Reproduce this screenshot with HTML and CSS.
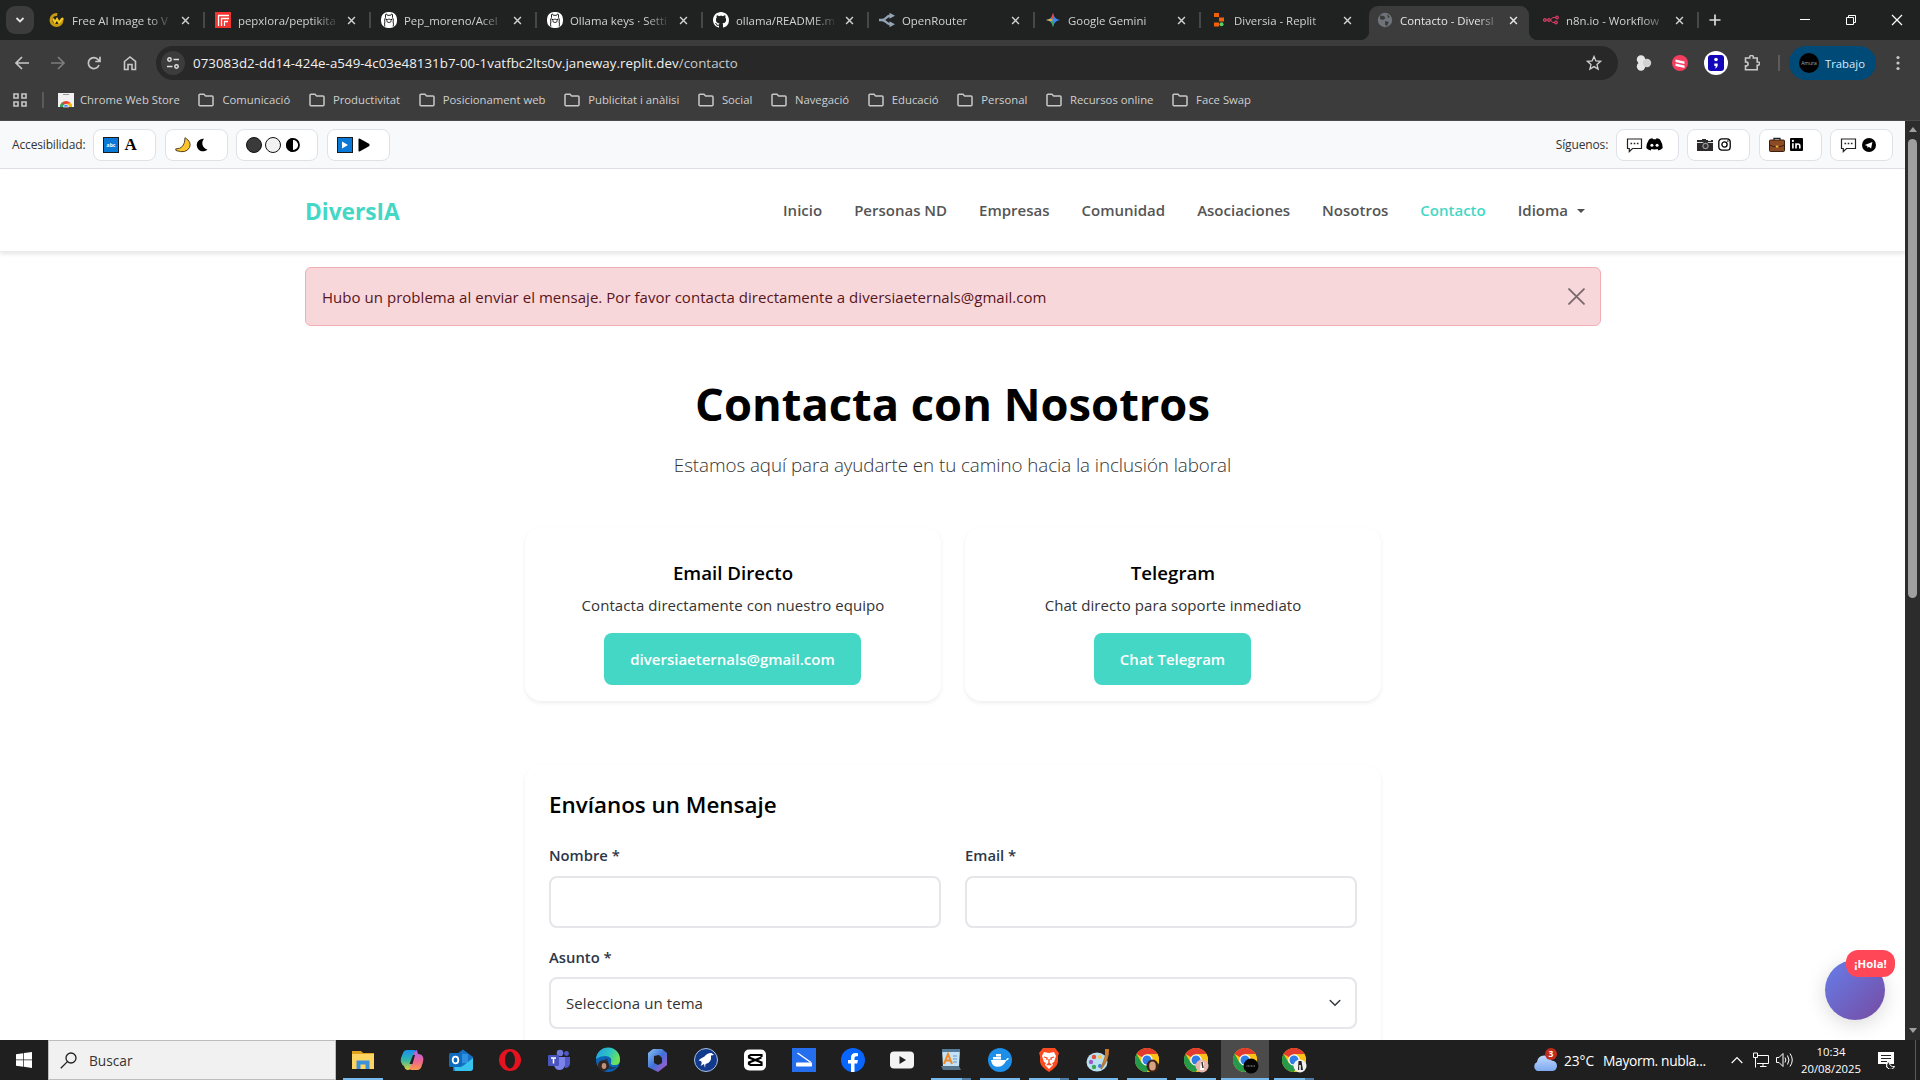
FILE: index.html
```html
<!DOCTYPE html>
<html lang="es">
<head>
<meta charset="utf-8">
<title>Contacto - DiversIA</title>
<link rel="stylesheet" href="styles.css">
</head>
<body>
<svg width="0" height="0" class="defs" aria-hidden="true">
  <defs>
    <linearGradient id="g-cop1" x1="0" y1="0" x2="0" y2="1"><stop offset="0" stop-color="#1a8ff0"/><stop offset=".5" stop-color="#2fb7a6"/><stop offset="1" stop-color="#e8d13a"/></linearGradient>
    <linearGradient id="g-cop2" x1="0" y1="0" x2="0" y2="1"><stop offset="0" stop-color="#a860f0"/><stop offset=".6" stop-color="#f0688c"/><stop offset="1" stop-color="#ff9a4a"/></linearGradient>
    <linearGradient id="g-365" x1="0" y1="0" x2="1" y2="1"><stop offset="0" stop-color="#8ac4f0"/><stop offset=".5" stop-color="#3f6fd8"/><stop offset="1" stop-color="#c257c9"/></linearGradient>
    <linearGradient id="g-edge" x1="0" y1="0" x2="1" y2=".4"><stop offset="0" stop-color="#1b9de2"/><stop offset=".6" stop-color="#2fc5c0"/><stop offset="1" stop-color="#6be35a"/></linearGradient>
    <linearGradient id="g-cloud" x1="0" y1="0" x2="0" y2="1"><stop offset="0" stop-color="#bcd8ff"/><stop offset="1" stop-color="#7fa9ee"/></linearGradient>
    <symbol id="folder" viewBox="0 0 16 16"><path d="M1 3.2a1 1 0 0 1 1-1h4l1.600 1.700H14a1 1 0 0 1 1 1v7.900a1 1 0 0 1-1 1H2a1 1 0 0 1-1-1z" fill="none" stroke="#c7c7c7" stroke-width="1.500"/></symbol>
    <symbol id="x" viewBox="0 0 10 10"><path d="M1.200 1.200l7.600 7.600M8.800 1.200l-7.600 7.600" stroke="currentColor" stroke-width="1.600" fill="none"/></symbol>
    <symbol id="llama" viewBox="0 0 16 16"><rect x="0" width="16" height="16" rx="7" fill="#fff"/><path d="M4.500 5.500V2.500q1-1.500 1.800.8h3.400q.8-2.300 1.800-.8v3q1.500 2 .6 4.500.8 2 0 4.500M4.500 5.500q-1.500 2-.6 4.500-.8 2 0 4.500" fill="none" stroke="#222" stroke-width="1"/><ellipse cx="8" cy="8.800" rx="2.200" ry="1.700" fill="none" stroke="#222" stroke-width=".9"/><circle cx="5.300" cy="7.400" r=".7"/><circle cx="10.700" cy="7.400" r=".7"/></symbol>
    <symbol id="chrome" viewBox="0 0 24 24"><circle cx="12" cy="12" r="12" fill="#fbc116"/><path d="M12 12L1.600 6A12 12 0 0 1 22.400 6H12z" fill="#e33b2e"/><path d="M1.600 6A12 12 0 0 0 12 24l5.200-9L12 12 6.800 15z" fill="#249a4a"/><path d="M22.400 6H12l5.200 9L12 24A12 12 0 0 0 22.400 6z" fill="#fbc116"/><circle cx="12" cy="12" r="5.800" fill="#fff"/><circle cx="12" cy="12" r="4.500" fill="#2f7de9"/></symbol>
    <symbol id="bubble" viewBox="0 0 16 16"><path d="M1 2h14v9.500H6L2.800 14.500v-3H1z" fill="#fff" stroke="#222" stroke-width="1.200"/><path d="M4 6.500h1.600M7.200 6.500h1.600M10.400 6.500h1.600" stroke="#222" stroke-width="1.500"/></symbol>
  </defs>
</svg>

<div class="tabstrip">
  <button class="tab-search"><svg width="10" height="10" viewBox="0 0 10 10"><path d="M1.500 3L5 6.500 8.500 3" fill="none" stroke="#e3e3e3" stroke-width="1.800"/></svg></button>
  <div class="tab"><svg class="fav" viewBox="0 0 16 16"><circle cx="7.500" cy="8" r="5.500" fill="none" stroke="#c79a10" stroke-width="3" stroke-dasharray="26 6"/><path d="M4 6.500l1.800 4L8 7l2 3.500 4-4.500" fill="none" stroke="#f6cb25" stroke-width="2"/></svg><span class="tt">Free AI Image to V</span><svg class="tx"><use href="#x"/></svg></div>
  <div class="tab"><svg class="fav" viewBox="0 0 16 16"><rect width="16" height="16" fill="#f0342f"/><path d="M3.500 14V3.500H14M6.500 14V6.500H14M9.500 14V9.500H13" fill="none" stroke="#fff" stroke-width="1.300"/></svg><span class="tt">pepxlora/peptikita</span><svg class="tx"><use href="#x"/></svg></div>
  <div class="tab"><svg class="fav"><use href="#llama"/></svg><span class="tt">Pep_moreno/Acel</span><svg class="tx"><use href="#x"/></svg></div>
  <div class="tab"><svg class="fav"><use href="#llama"/></svg><span class="tt">Ollama keys · Setti</span><svg class="tx"><use href="#x"/></svg></div>
  <div class="tab"><svg class="fav" viewBox="0 0 16 16"><path fill="#fff" d="M8 0C3.580 0 0 3.580 0 8c0 3.540 2.290 6.530 5.470 7.590.4.070.55-.17.55-.38 0-.19-.01-.82-.01-1.490-2.010.37-2.530-.49-2.690-.94-.09-.23-.48-.94-.82-1.130-.28-.15-.68-.52-.01-.53.63-.01 1.080.58 1.230.82.72 1.210 1.870.87 2.330.66.07-.52.28-.87.51-1.070-1.780-.2-3.640-.89-3.640-3.950 0-.87.31-1.590.82-2.150-.08-.2-.36-1.020.08-2.120 0 0 .67-.21 2.200.82.64-.18 1.320-.27 2-.27s1.360.09 2 .27c1.530-1.040 2.200-.82 2.200-.82.44 1.100.16 1.920.08 2.120.51.56.82 1.270.82 2.150 0 3.070-1.870 3.750-3.650 3.950.29.25.54.73.54 1.480 0 1.070-.01 1.930-.01 2.200 0 .21.15.46.55.38A8.010 8.010 0 0 0 16 8c0-4.420-3.580-8-8-8z"/></svg><span class="tt">ollama/README.m</span><svg class="tx"><use href="#x"/></svg></div>
  <div class="tab"><svg class="fav" viewBox="0 0 16 16"><path d="M0 8h3q2 0 4-2t4-2.200M3 8q2 0 4 2t4 2.200" fill="none" stroke="#94a3b8" stroke-width="2.400"/><path d="M10.500 0.800l5.500 3-5.500 3zM10.500 9.200l5.500 3-5.500 3z" fill="#94a3b8"/></svg><span class="tt">OpenRouter</span><svg class="tx"><use href="#x"/></svg></div>
  <div class="tab"><svg class="fav" viewBox="0 0 16 16"><path d="M8 1q1 6 7 7-6 1-7 7-1-6-7-7 6-1 7-7z" fill="#3f87f5"/><path d="M8 1q1 6 1.500 5.500L6 7z" fill="#ea4a3c"/><path d="M1 8l5-1.300L8 8l-2 1.300z" fill="#f2b51f"/><path d="M8 15l-1.500-5L8 8.500l1 2z" fill="#35a853"/></svg><span class="tt">Google Gemini</span><svg class="tx"><use href="#x"/></svg></div>
  <div class="tab nosep"><svg class="fav" viewBox="0 0 16 16"><path d="M3 1h5v4H3zM8 5.500h5v4H8zM3 10.500h5v4H3z" fill="#f2600c"/><circle cx="10.500" cy="12.200" r="2" fill="#56d364"/></svg><span class="tt">Diversia - Replit</span><svg class="tx"><use href="#x"/></svg></div>
  <div class="tab active"><svg class="fav" viewBox="0 0 16 16"><circle cx="8" cy="8" r="7.200" fill="#6f747b"/><path d="M3 3.500l4 .5 1.500 2L6 8 3 7zM8 9l4 1-2 4-2-1zM10 2l3 3-2 1z" fill="#3c3c3c"/></svg><span class="tt">Contacto - Diversl</span><svg class="tx"><use href="#x"/></svg></div>
  <div class="tab"><svg class="fav" viewBox="0 0 16 16"><path d="M1.600 8h6l2-2.500h4M7.600 8l2 2.500h3" stroke="#dd3d67" fill="none"/><g fill="#3c1c26" stroke="#dd3d67" stroke-width="1.200"><circle cx="1.800" cy="8" r="1.300"/><circle cx="6" cy="8" r="1.300"/><circle cx="14" cy="5.500" r="1.300"/><circle cx="13" cy="10.500" r="1.300"/></g></svg><span class="tt">n8n.io - Workflow</span><svg class="tx"><use href="#x"/></svg></div>
  <svg class="newtab" viewBox="0 0 12 12"><path d="M6 .5v11M.5 6h11" stroke="#dcdcdc" stroke-width="1.700"/></svg>
  <div class="winbtns">
    <svg viewBox="0 0 12 12"><path d="M1 5.500h10" stroke="#fff"/></svg>
    <svg viewBox="0 0 12 12"><path d="M1.500 3.500h7v7h-7zM3.500 3.500v-2h7v7h-2" fill="none" stroke="#fff"/></svg>
    <svg viewBox="0 0 12 12"><path d="M1 1l10 10M11 1L1 11" stroke="#fff" stroke-width="1.200"/></svg>
  </div>
</div>

<div class="toolbar">
  <div class="navbtns">
    <svg viewBox="0 0 16 16"><path d="M15 8H2M8 2L2 8l6 6" fill="none" stroke="#c7c7c7" stroke-width="1.700"/></svg>
    <svg viewBox="0 0 16 16"><path d="M1 8h13M8 2l6 6-6 6" fill="none" stroke="#7c7c7c" stroke-width="1.700"/></svg>
    <svg viewBox="0 0 16 16"><path d="M13 10a5.500 5.500 0 1 1-.8-5.300L14 6.500M14 1.800v4.700H9.300" fill="none" stroke="#c7c7c7" stroke-width="1.700"/></svg>
    <svg viewBox="0 0 16 16"><path d="M2.500 6.500L8 2l5.500 4.500V14.500H10V9.500H6v5H2.500z" fill="none" stroke="#c7c7c7" stroke-width="1.600"/></svg>
  </div>
  <div class="omnibox">
    <span class="site"><svg width="16" height="16" viewBox="0 0 16 16"><g fill="none" stroke="#dedede" stroke-width="1.500"><circle cx="4.500" cy="4.500" r="1.700"/><path d="M8.500 4.500H14M2 11.500h5.500"/><circle cx="11.500" cy="11.500" r="1.700"/></g></svg></span>
    <span class="url">073083d2-dd14-424e-a549-4c03e48131b7-00-1vatfbc2lts0v.janeway.replit.dev<i>/contacto</i></span>
    <svg class="star" viewBox="0 0 16 16"><path d="M8 1.500l1.900 4.400 4.700.4-3.600 3.100 1.100 4.700L8 11.600l-4.100 2.500L5 9.400 1.400 6.300l4.700-.4z" fill="none" stroke="#d0d0d0" stroke-width="1.300"/></svg>
  </div>
  <div class="exts">
    <svg viewBox="0 0 16 16"><g fill="#e6e6e6"><circle cx="5" cy="4.500" r="4.200"/><circle cx="5" cy="11.500" r="4.200"/><circle cx="11" cy="8" r="4.200" fill="#d2d2d2"/></g></svg>
    <svg viewBox="0 0 16 16"><circle cx="8" cy="8" r="8" fill="#f53d5f"/><path d="M3.500 4.500l9 2v2.500l-9-2zM3.500 8.500l9 2V13l-9-2z" fill="#fff"/></svg>
    <svg class="big" viewBox="0 0 24 24"><circle cx="12" cy="12" r="12" fill="#fff"/><rect x="4" y="4" width="16" height="16" rx="3" fill="#1206b8"/><circle cx="12" cy="8.500" r="1.800" fill="#fff"/><path d="M10.300 12.500h3.400q.6 3.500-2.500 5l.6-2.500h-1.500z" fill="#fff"/></svg>
    <svg viewBox="0 0 16 16"><path d="M1.500 3h4.200q-.4-2.500 1.800-2.500T9.300 3h3.900v4q2.300-.3 2.300 1.600T13.200 10.300V14.800H1.500v-3.900q2.600 0 2.600-2t-2.600-2z" fill="none" stroke="#c7c7c7" stroke-width="1.600"/></svg>
  </div>
  <span class="tsep"></span>
  <div class="profile"><span class="avatar">Amura</span>Trabajo</div>
  <svg class="dots" viewBox="0 0 4 16"><g fill="#c7c7c7"><circle cx="2" cy="2.500" r="1.600"/><circle cx="2" cy="8" r="1.600"/><circle cx="2" cy="13.500" r="1.600"/></g></svg>
</div>

<div class="bookmarks">
  <svg class="apps" viewBox="0 0 16 16"><path d="M2 2h4v4H2zM10 2h4v4h-4zM2 10h4v4H2zM10 10h4v4h-4z" fill="none" stroke="#c7c7c7" stroke-width="1.600"/></svg>
  <span class="bsep"></span>
  <span class="bm store"><svg viewBox="0 0 16 16"><path d="M0 1h16v14H0z" fill="#f1f1f1"/><path d="M5 2.500h6" stroke="#999"/><path d="M2 15a6 6 0 0 1 12 0z" fill="#e94235"/><path d="M2 15a6 6 0 0 1 2-4.500L7 15z" fill="#34a853"/><path d="M14 15a6 6 0 0 0-1.500-4L8 12v3z" fill="#fbbc05"/><path d="M5.300 15a2.700 2.700 0 0 1 5.400 0z" fill="#4285f4" stroke="#fff" stroke-width=".7"/></svg>Chrome Web Store</span>
  <span class="bm"><svg><use href="#folder"/></svg>Comunicació</span>
  <span class="bm"><svg><use href="#folder"/></svg>Productivitat</span>
  <span class="bm"><svg><use href="#folder"/></svg>Posicionament web</span>
  <span class="bm"><svg><use href="#folder"/></svg>Publicitat i anàlisi</span>
  <span class="bm"><svg><use href="#folder"/></svg>Social</span>
  <span class="bm"><svg><use href="#folder"/></svg>Navegació</span>
  <span class="bm"><svg><use href="#folder"/></svg>Educació</span>
  <span class="bm"><svg><use href="#folder"/></svg>Personal</span>
  <span class="bm"><svg><use href="#folder"/></svg>Recursos online</span>
  <span class="bm"><svg><use href="#folder"/></svg>Face Swap</span>
</div>

<div class="viewport">
  <div class="page">
    <div class="access">
      <span class="alabel">Accesibilidad:</span>
      <button class="abtn"><svg width="16" height="16" viewBox="0 0 16 16"><rect x=".5" y=".5" width="15" height="15" fill="#0a78d7" stroke="#1b1b1b"/><text x="8" y="10" font-size="5" font-weight="700" fill="#fff" text-anchor="middle" font-family="Open Sans">abc</text></svg><span class="serif-a">A</span></button>
      <button class="abtn"><svg width="16" height="16" viewBox="0 0 16 16"><path d="M10 .7Q17 5 14.500 10.500 11 17 1 13.500l-.3-1.600Q10 12 10 .7z" fill="#fcc52c" stroke="#2b2112" stroke-width=".8"/></svg><svg width="12" height="14" viewBox="0 0 12 14"><path d="M8 .8A6.300 6.300 0 1 0 11.500 11.500 6.500 6.500 0 0 1 8 .8z"/></svg></button>
      <button class="abtn w3"><svg width="16" height="16" viewBox="0 0 16 16"><circle cx="8" cy="8" r="7.500" fill="#3a3a3a" stroke="#111"/></svg><svg class="m3" width="16" height="16" viewBox="0 0 16 16"><circle cx="8" cy="8" r="7.500" fill="#f2f2f2" stroke="#111"/></svg><svg width="14" height="14" viewBox="0 0 14 14"><circle cx="7" cy="7" r="6" fill="#fff" stroke="#000" stroke-width="1.800"/><path d="M7 0a7 7 0 0 0 0 14z"/></svg></button>
      <button class="abtn"><svg width="16" height="16" viewBox="0 0 16 16"><rect x=".5" y=".5" width="15" height="15" fill="#0a78d7" stroke="#1b1b1b"/><path d="M5 4.500v7l6-3.500z" fill="#fff"/></svg><svg width="12" height="14" viewBox="0 0 12 14"><path d="M.5 1.500q0-1.500 1.500-.7l9 5q1.200 1.200 0 2.400l-9 5q-1.500.8-1.500-.7z"/></svg></button>
      <div class="social">
      <span class="alabel follow">Síguenos:</span>
      <button class="abtn"><svg width="17" height="16"><use href="#bubble"/></svg><svg class="dc" width="17" height="13" viewBox="0 0 17 13"><path d="M3 1.500Q5 .4 6.500.3L7 1.200h3l.5-.9q1.500.1 3.500 1.200 2.700 4 2.700 8.500-1.500 1.800-4.200 2.600l-1-1.500q-3 .9-6 0l-1 1.500Q1.800 11.800.3 10 .3 5.500 3 1.500z"/><circle cx="5.900" cy="7.200" r="1.500" fill="#fff"/><circle cx="11.100" cy="7.200" r="1.500" fill="#fff"/></svg></button>
      <button class="abtn"><svg width="16" height="16" viewBox="0 0 16 16"><path d="M0 3h5V2h4v1h7v11H0z" fill="#2c2a2a"/><path d="M0 5.500h16" stroke="#ddd"/><circle cx="8.500" cy="9" r="3.800" fill="#999" stroke="#222"/><circle cx="8.500" cy="9" r="2" fill="#333"/><path d="M11 3.500h3" stroke="#eee"/></svg><svg width="13" height="13" viewBox="0 0 13 13"><g fill="none" stroke="#000" stroke-width="1.300"><rect x=".8" y=".8" width="11.400" height="11.400" rx="3.200"/><circle cx="6.500" cy="6.500" r="2.600"/></g><circle cx="9.900" cy="3.100" r=".8"/></svg></button>
      <button class="abtn"><svg width="16" height="16" viewBox="0 0 16 16"><path d="M5 3.500V1.300h6v2.200" fill="none" stroke="#222" stroke-width="1.300"/><rect x=".5" y="3" width="15" height="11.500" rx="1" fill="#8a4b25" stroke="#3a1f10"/><path d="M.5 8q7.500 4 15 0" fill="none" stroke="#3a1f10"/><rect x="6.800" y="8.600" width="2.600" height="2" fill="#f5b52e"/></svg><svg width="13" height="13" viewBox="0 0 13 13"><rect width="13" height="13" rx="1"/><path d="M2.900 5.200v5.200M6 10.400V5.200M6 8q0-2 1.900-2t1.900 2v2.400" fill="none" stroke="#fff" stroke-width="1.600"/><circle cx="2.900" cy="2.900" r="1.100" fill="#fff"/></svg></button>
      <button class="abtn"><svg width="17" height="16"><use href="#bubble"/></svg><svg width="14" height="14" viewBox="0 0 14 14"><circle cx="7" cy="7" r="7"/><path d="M2.800 6.900l7.600-3-1.300 6.500-2.300-1.600-1.200 1.200-.3-2z" fill="#fff"/></svg></button>
      </div>
    </div>
    <nav class="mainnav">
      <span class="brand">DiversIA</span>
      <div class="links"><a>Inicio</a><a>Personas ND</a><a>Empresas</a><a>Comunidad</a><a>Asociaciones</a><a>Nosotros</a><a class="on">Contacto</a><a class="drop">Idioma</a></div>
    </nav>
    <div class="alert"><span>Hubo un problema al enviar el mensaje. Por favor contacta directamente a diversiaeternals@gmail.com</span><svg width="17" height="17" viewBox="0 0 16 16"><path d="M1 1l14 14M15 1L1 15" stroke="#7b6b6d" stroke-width="1.800" stroke-linecap="round"/></svg></div>
    <h1>Contacta con Nosotros</h1>
    <p class="lead">Estamos aquí para ayudarte en tu camino hacia la inclusión laboral</p>
    <div class="cards">
      <div class="card"><h4>Email Directo</h4><p>Contacta directamente con nuestro equipo</p><a class="cta">diversiaeternals@gmail.com</a></div>
      <div class="card"><h4>Telegram</h4><p>Chat directo para soporte inmediato</p><a class="cta tg">Chat Telegram</a></div>
    </div>
    <div class="formcard">
      <h3>Envíanos un Mensaje</h3>
      <div class="row">
        <div class="field"><label>Nombre *</label><div class="box"></div></div>
        <div class="field"><label>Email *</label><div class="box"></div></div>
      </div>
      <div class="field"><label>Asunto *</label><div class="box select">Selecciona un tema<svg width="12" height="12" viewBox="0 0 12 12"><path d="M1.200 3.500L6 8.300l4.800-4.800" fill="none" stroke="#343a40" stroke-width="1.500" stroke-linecap="round"/></svg></div></div>
    </div>
    <div class="chat"><span>¡Hola!</span></div>
  </div>
  <div class="scroll"><i class="up"></i><i class="thumb"></i><i class="down"></i></div>
</div>

<div class="taskbar">
  <div class="start"><svg width="16" height="16" viewBox="0 0 16 16"><path d="M0 2.200l7.300-1v6.300H0zM8 1.100L16 0v7.500H8zM0 8.300h7.300v6.400L0 13.700zM8 8.300h8V16l-8-1.200z" fill="#fff"/></svg></div>
  <div class="search"><svg width="17" height="17" viewBox="0 0 17 17"><circle cx="11" cy="6" r="5" fill="none" stroke="#222" stroke-width="1.300"/><path d="M7.400 9.600L.8 16.200" stroke="#222" stroke-width="1.300"/></svg>Buscar</div>
  <div class="tasks">
    <div class="task open"><svg viewBox="0 0 24 24"><path d="M1 3h9l2 2h11v16H1z" fill="#e0a11d"/><path d="M1 6h22v15H1z" fill="#fcd462"/><path d="M5.500 21v-8.500h13V21h-4v-4.500h-5V21z" fill="#3c91d9"/></svg></div>
    <div class="task"><svg viewBox="0 0 24 24"><path d="M7 2h7q2 0 1.500 2L11 20q-1 2-3 2-3 0-4-4-2-1-3-4-.5-2 0-4l2-5q1-3 4-3z" fill="url(#g-cop1)"/><path d="M17 22h-6q-1.500-.5-1-2l4-15q1-3 3-3l1 4q4 0 5 3t-1 8q-1 5-5 5z" fill="url(#g-cop2)"/><path d="M9.500 16L13 7h2l-2.500 9z" fill="#1f1f1f"/></svg></div>
    <div class="task"><svg viewBox="0 0 24 24"><path d="M4 9L14 1.500 24 9v11a3 3 0 0 1-3 3H4z" fill="#1572c4"/><path d="M5 6h14v9H5z" fill="#2f8fe0"/><path d="M4 14l10 4 10-8v10a3 3 0 0 1-3 3H6z" fill="#38c3ee"/><rect y="5" width="13" height="14" rx="1.500" fill="#0f6cbd"/><ellipse cx="6.500" cy="12" rx="2.800" ry="3.400" fill="none" stroke="#fff" stroke-width="1.800"/></svg></div>
    <div class="task"><svg viewBox="0 0 24 24"><ellipse cx="12" cy="12" rx="11" ry="11" fill="#e5121f"/><ellipse cx="12" cy="12" rx="5" ry="8.500" fill="#1f1f1f"/></svg></div>
    <div class="task"><svg viewBox="0 0 24 24"><circle cx="13" cy="5" r="3.300" fill="#6f78d8"/><circle cx="19.500" cy="5.500" r="2.400" fill="#5059c9"/><path d="M15 9h8v7q-1 4-5 4z" fill="#5059c9"/><path d="M7 9h11v8q-1 5-5.500 5T7 17z" fill="#7b83eb"/><rect x="1" y="7" width="11" height="11" rx="1" fill="#4a54bd"/><path d="M4 10h5M6.500 10v5.500" stroke="#fff" stroke-width="1.500"/></svg></div>
    <div class="task"><svg viewBox="0 0 24 24"><circle cx="12" cy="12" r="12" fill="#0d63b8"/><path d="M0 11A12 12 0 0 1 24 12q0 5-5 5-5 0-4-2 2-6-5-7-6 0-10 3z" fill="url(#g-edge)"/><path d="M10 10q-4 5 1 10 4 4 10-1-8 1-9-4 1-3-2-5z" fill="#1f1f1f" opacity=".5"/><circle cx="7.500" cy="17.500" r="5.500" fill="#332620"/><ellipse cx="8" cy="18" rx="2.300" ry="3" fill="#c4917a"/></svg></div>
    <div class="task"><svg viewBox="0 0 24 24"><path d="M8 1h9l5 4v12l-9 7-10-5V5z" fill="url(#g-365)"/><path d="M9 8l5-1 3 3v5l-4 2-4-2z" fill="#1f1f1f"/></svg></div>
    <div class="task"><svg viewBox="0 0 24 24"><circle cx="12" cy="12" r="11.500" fill="#123a8c" stroke="#a9bfe2"/><path d="M4.500 12.500q2-2 6-4 3-4 7-3.500l2.500 2-3 .5q1 7-5.500 8.500l-.5 4-1-4-3.500 2q2-3 .5-5z" fill="#fff"/></svg></div>
    <div class="task"><svg viewBox="0 0 24 24"><rect x="1" y="1.500" width="22" height="21" rx="5" fill="#fff"/><path d="M18.500 9V7h-11L6 8v1.500l12.500 5V17H7.500L6 16v-1.500l12.500-5" fill="none" stroke="#000" stroke-width="2.200"/></svg></div>
    <div class="task"><svg viewBox="0 0 24 24"><rect width="24" height="24" fill="#256fee"/><path d="M5.500 5L19 14.500" stroke="#fff" stroke-width="1.500"/><rect x="4" y="14.500" width="16" height="4" rx=".8" fill="#fff"/></svg></div>
    <div class="task"><svg viewBox="0 0 24 24"><circle cx="12" cy="12" r="12" fill="#0866ff"/><path d="M10 24v-8.500H7V12h3V9.500Q10 5 14.500 5l2.500.3v3h-1.500q-2 0-2 1.800V12h3.400l-.6 3.500h-2.800V24z" fill="#fff"/></svg></div>
    <div class="task"><svg viewBox="0 0 24 24"><rect y="3.500" width="24" height="17" rx="4" fill="#f3f3f3"/><path d="M9.500 8v8l6.500-4z" fill="#1f1f1f"/></svg></div>
    <div class="task open multi"><svg viewBox="0 0 24 24"><path d="M3 1h18l-1 18H4z" fill="#c5e3f8"/><path d="M3 1h18v3H3z" fill="#527b9b"/><path d="M2 18h18l2 4H4z" fill="#56748a"/><path d="M5 16L9 6l4 10M6.500 12.500h5" fill="none" stroke="#f18a25" stroke-width="2"/><path d="M14 8h4M14 11h4M14 14h4" stroke="#6b96b8"/></svg></div>
    <div class="task open"><svg viewBox="0 0 24 24"><circle cx="12" cy="12" r="12" fill="#1d8fe8"/><path d="M3 12h15q1-3 3-1.500-1 2-3 2.200-2 6-9 6-5 0-6-6.700z" fill="#fff"/><path d="M5 9h8v2.500H5zM8 6h5v2.500H8z" fill="#fff"/></svg></div>
    <div class="task open multi"><svg viewBox="0 0 24 24"><path d="M6 0h12l4 5-1 3v6q-1 5-9 10Q4 19 3 14V8L2 5z" fill="#fb4b1f"/><path d="M7 4l5 1 5-1 2 4-2 6-2 1 1 2-4 4-4-4 1-2-2-1-2-6z" fill="#fff"/><path d="M7 9l3 1v2M17 9l-3 1v2M12 11v4l-1.500 1.500h3L12 15" stroke="#fb4b1f" fill="none" stroke-width="1.300"/></svg></div>
    <div class="task open"><svg viewBox="0 0 24 24"><ellipse cx="11" cy="14" rx="10.500" ry="9.500" fill="#b9dff3"/><circle cx="5" cy="14" r="2.200" fill="#9b59c9"/><circle cx="8" cy="9" r="2.200" fill="#e74c3c"/><circle cx="14" cy="9" r="2" fill="#f6c944"/><circle cx="8" cy="19" r="2.200" fill="#3fa74d"/><circle cx="14" cy="18" r="2" fill="#3682d8"/><path d="M22 2q1 9-7 19L20 7z" stroke="#b9762e" stroke-width="1.500" fill="#e5a45a"/><path d="M19 1h4l-1 7-3-1z" fill="#d07a2c"/></svg></div>
    <div class="task open"><svg viewBox="0 0 24 24"><use href="#chrome"/><ellipse cx="17.500" cy="18" rx="6" ry="6.500" fill="#3c2419"/><ellipse cx="17.500" cy="18" rx="3.300" ry="4.500" fill="#d9a283"/></svg></div>
    <div class="task open"><svg viewBox="0 0 24 24"><use href="#chrome"/><circle cx="18" cy="18" r="6.500" fill="#e6b8ae"/><path d="M17 13l3 2v7h-4z" fill="#fff"/><path d="M18 14l1 6" stroke="#333" stroke-width="1.500"/></svg></div>
    <div class="task open cur"><svg viewBox="0 0 24 24"><use href="#chrome"/><circle cx="18" cy="18" r="7.500" fill="#060606"/><path d="M13.500 18h9" stroke="#999" stroke-dasharray="1 .5"/></svg></div>
    <div class="task open multi"><svg viewBox="0 0 24 24"><use href="#chrome"/><circle cx="18" cy="18" r="6.500" fill="#f1f1f1"/><path d="M16.500 13h3l1.500 9h-5z" fill="#222"/><path d="M18 17v5" stroke="#fff" stroke-width="1.500"/></svg></div>
  </div>
  <div class="tray">
    <svg class="weather" width="26" height="26" viewBox="0 0 26 26"><path d="M5 24a5 5 0 0 1 0-9q1-7 8-6.500 5 .5 6.500 5Q25 14 25 19q-.5 5-5 5z" fill="url(#g-cloud)"/><circle cx="19" cy="7" r="6" fill="#c42b1c"/><text x="19" y="10" font-size="8.500" font-weight="700" fill="#fff" text-anchor="middle" font-family="Open Sans">3</text></svg>
    <span class="temp">23°C</span><span class="cond">Mayorm. nubla...</span>
    <svg class="chev" width="12" height="8" viewBox="0 0 12 8"><path d="M.7 7L6 1.500 11.300 7" fill="none" stroke="#fff" stroke-width="1.200"/></svg>
    <svg class="net" width="16" height="16" viewBox="0 0 16 16"><path d="M5 3.500h10.500v8H4M2.500 6v9.500M7 14.500h6.500M10 11.500v3M.5 1h4v4.500h-4z" fill="none" stroke="#fff"/></svg>
    <svg class="vol" width="17" height="16" viewBox="0 0 17 16"><path d="M.5 5.500H3l4-4v13l-4-4H.5zM9 5.500q1.700 2.500 0 5M11.500 3.500q3 4.500 0 9M14 1.500q4.500 6.500 0 13" fill="none" stroke="#fff"/></svg>
    <div class="clock">10:34<br>20/08/2025</div>
    <svg class="notif" width="17" height="17" viewBox="0 0 17 17"><path d="M0 0h16v12h-5l-3 4v-4H0z" fill="#fff"/><path d="M3 3.500h10M3 6.500h10M3 9.500h6" stroke="#222"/><path d="M11.500 9.500a4 4 0 1 0 5 5 4 4 0 0 1-5-5z" fill="#222" stroke="#fff"/></svg>
  </div>
</div>
</body>
</html>
```
FILE: styles.css
```css
*{box-sizing:border-box}
body{margin:0;width:1920px;height:1080px;overflow:hidden;display:flex;flex-direction:column;font-family:"Open Sans","Noto Sans",sans-serif;background:#fff;color:#333}
h1,h3,h4,p{margin:0}
svg{flex:none;display:block}
.defs{position:absolute}

/* Browser tabs */
.tabstrip{height:40px;flex:none;background:#1f2221;display:flex;align-items:center;padding-left:6px}
.tab-search{width:28px;height:28px;border:0;border-radius:9px;background:#3c3c3c;display:flex;align-items:center;justify-content:center;padding:0;margin-right:4px}
.tab{width:166px;flex:none;height:34px;align-self:flex-end;display:flex;align-items:center;padding:0 14px 6px 11px;color:#d2d2d2;font-size:11.400px;position:relative}
.tab::after{content:"";position:absolute;right:-1px;top:6px;width:2px;height:16px;background:#464847}
.tab.nosep::after,.tab.active::after{display:none}
.fav{width:16px;height:16px;margin-right:7px}
.tt{width:98px;white-space:nowrap;-webkit-mask-image:linear-gradient(90deg,#000 76px,rgba(0,0,0,.15) 98px)}
.tx{width:9px;height:9px;margin-left:11px}
.tab.active{color:#e8e8e8;width:160px;margin:0 3px;padding-left:8px;padding-right:11px;background:#3c3c3c;border-radius:9px 9px 0 0}
.tab.active::before{content:"";position:absolute;left:-9px;right:-9px;bottom:0;height:9px;background:radial-gradient(circle at 0 0,transparent 9px,#3c3c3c 9.500px) left/9px 9px no-repeat,radial-gradient(circle at 100% 0,transparent 9px,#3c3c3c 9.500px) right/9px 9px no-repeat}
.newtab{width:12px;height:12px;margin-left:11px}
.winbtns{margin-left:auto;display:flex;gap:34px;padding-right:17px}
.winbtns svg{width:12px;height:12px}

/* Toolbar */
.toolbar{height:46px;flex:none;background:#3c3c3c;display:flex;align-items:center;padding-left:14px}
.navbtns{display:flex;gap:20px;width:142px}
.navbtns svg{width:16px;height:16px}
.omnibox{width:1462px;height:34px;border-radius:17px;background:#282828;display:flex;align-items:center;padding:0 16px 0 5px}
.site{width:24px;height:24px;border-radius:50%;background:#3c3c3c;display:flex;align-items:center;justify-content:center;margin-right:8px}
.url{font-size:13.300px;color:#f0f0f0;letter-spacing:.05px;white-space:nowrap}
.url i{font-style:normal;color:#c8c8c8}
.star{width:16px;height:16px;margin-left:auto}
.exts{display:flex;align-items:center;gap:20px;margin-left:18px}
.exts svg{width:16px;height:16px}
.exts .big{width:24px;height:24px;margin:0 -4px}
.tsep{width:2px;height:16px;background:#5c5c5c;margin:0 9px 0 18px}
.profile{width:87px;height:34px;border-radius:17px;background:#004a77;color:#d5ecff;font-size:11.300px;display:flex;align-items:center;padding-left:10px;gap:6px}
.avatar{width:20px;height:20px;border-radius:50%;background:#000;color:#aaa;font-size:5px;line-height:20px;text-align:center}
.dots{width:4px;height:16px;margin-left:20px}
.bookmarks{height:35px;flex:none;background:#3c3c3c;border-bottom:1px solid #4a4a4a;display:flex;align-items:center;padding:0 0 7px 12px;color:#cfcfcf;font-size:11.300px}
.apps{width:16px;height:16px}
.bsep{width:2px;height:16px;background:#5a5a5a;margin:0 14px}
.bm{display:flex;align-items:center;gap:8px;margin-right:18.650px;white-space:nowrap}
.bm svg{width:16px;height:16px}
.bm.store{gap:6px}

/* Page */
.viewport{height:919px;flex:none;display:flex}
.page{width:1905px;position:relative;overflow:hidden}
.access{height:48px;background:#f8f9fa;border-bottom:1px solid #dee2e6;display:flex;align-items:center;padding:0 12px;gap:8.400px}
.social{margin-left:auto;display:flex;align-items:center;gap:8.300px}
.alabel{font-size:12px;width:73px;white-space:nowrap;letter-spacing:-.15px}
.follow{width:52px}
.abtn{width:63px;height:32px;background:#fff;border:1px solid #dee2e6;border-radius:8px;display:flex;align-items:center;padding:0 0 0 9px;gap:5px;flex:none}
.abtn.w3{width:82px}
.m3{margin-left:-2px}
.dc{margin-left:-2px}
.serif-a{font:bold 17px/16px "Liberation Serif",serif;color:#000}
.mainnav{height:83px;display:flex;align-items:center;justify-content:space-between;padding:0 320px 0 305px;box-shadow:0 2px 4px rgba(0,0,0,.1);border-bottom:1px solid #ebebeb}
.brand{font-size:22.700px;font-weight:700;color:#44d7c5;padding-top:2px}
.links{display:flex;gap:32px;font-size:15px;font-weight:600;color:#555;letter-spacing:0}
.on{color:#44d7c5}
.drop::after{content:"";display:inline-block;border:4px solid transparent;border-top-color:#4f4f4f;border-bottom:0;margin-left:9px;vertical-align:3px}
.alert{margin:15px 304px 0 305px;height:59px;background:#f8d7da;border:1px solid #f1aeb5;border-radius:6px;color:#58151c;font-size:15px;letter-spacing:.035px;display:flex;align-items:center;justify-content:space-between;padding:0 15px 0 16px}
h1{text-align:center;color:#000;font-size:45.300px;font-weight:700;line-height:58px;margin-top:49px}
.lead{text-align:center;font-size:18.800px;font-weight:300;letter-spacing:-.065px;line-height:30px;margin-top:17px;color:#333}
.cards{display:grid;grid-template-columns:416px 416px;gap:24px;width:856px;margin:47px auto 0 525px}
.card{height:174px;border-radius:16px;background:#fff;box-shadow:0 2px 4px rgba(0,0,0,.07);text-align:center;padding-top:33px}
h4{font-size:18.700px;font-weight:600;line-height:26px;color:#000}
.card p{font-size:15px;letter-spacing:.07px;line-height:24px;margin-top:7px}
.cta{display:flex;align-items:center;justify-content:center;width:257px;height:52px;margin:16px 0 0 79px;border-radius:8px;background:#44d7c5;color:#fff;font-weight:600;font-size:15px}
.cta.tg{width:157px;margin-left:129px}
.formcard{margin:64px 0 0 525px;width:856px;height:320px;border-radius:16px;padding:24px;box-shadow:0 2px 4px rgba(0,0,0,.07)}
h3{font-size:22.400px;font-weight:600;line-height:32px;color:#000}
.row{display:flex;gap:24px}
.field{width:100%;padding-top:22px}
.row+.field{padding-top:17px}
label{display:block;font-size:14.800px;font-weight:600;line-height:24px;color:#2c3648;margin-bottom:9px}
.row+.field label{margin-bottom:8px}
.box{height:52px;border:2px solid #e5e5ea;border-radius:8px}
.select{display:flex;align-items:center;justify-content:space-between;padding:0 14px 0 15px;font-size:15px;letter-spacing:.07px}
.chat{position:absolute;left:1825px;top:839px;width:60px;height:60px;border-radius:50%;background:linear-gradient(135deg,#667eea,#764ba2);box-shadow:0 4px 20px rgba(0,0,0,.15)}
.chat span{position:absolute;left:21px;top:-10px;width:49px;height:27px;border-radius:12px;background:#ff4757;color:#fff;font-size:11.300px;font-weight:700;line-height:27px;text-align:center}
.scroll{width:15px;background:#2c2c2c;display:flex;flex-direction:column;align-items:center}
.up{border:4px solid transparent;border-bottom:5px solid #9f9f9f;border-top:0;margin-top:6px}
.thumb{width:9px;height:459px;border-radius:5px;background:#9f9f9f;margin-top:7px}
.down{border:4px solid transparent;border-top:5px solid #9f9f9f;border-bottom:0;margin:auto 0 7px}

/* Windows taskbar */
.taskbar{height:40px;flex:none;background:#1f1f1f;display:flex;align-items:center;color:#fff}
.start{width:48px;display:flex;justify-content:center}
.search{width:288px;height:40px;background:#f1f1f1;border:1px solid #bdbdbd;display:flex;align-items:center;padding-left:11px;gap:12px;font-size:13.700px;color:#333}
.tasks{display:flex;gap:1px;margin-left:3px}
.task{width:48px;height:40px;display:flex;align-items:center;justify-content:center;position:relative}
.task svg{width:24px;height:24px;overflow:visible}
.open::after{content:"";position:absolute;left:4px;right:4px;bottom:0;height:2px;background:#76b9ed}
.multi::after{background:linear-gradient(90deg,#76b9ed 31px,#4d7da5 31px)}
.cur{background:#4b4b4b}
.cur::after{left:0;right:0}
.tray{margin-left:auto;width:388px;display:flex;align-items:center;height:40px;font-size:13.800px}
.temp{margin-left:6px;width:39px;letter-spacing:-.1px}
.cond{width:124px;white-space:nowrap;letter-spacing:-.35px}
.chev{margin-left:4px}
.net{margin-left:10px}
.vol{margin-left:7px}
.clock{font-size:11.300px;line-height:17px;text-align:center;width:62px;margin-left:7px}
.notif{margin-left:16px}
.tray::after{content:"";width:1px;height:40px;background:#5a5a5a;margin-left:auto;margin-right:4px}
```
